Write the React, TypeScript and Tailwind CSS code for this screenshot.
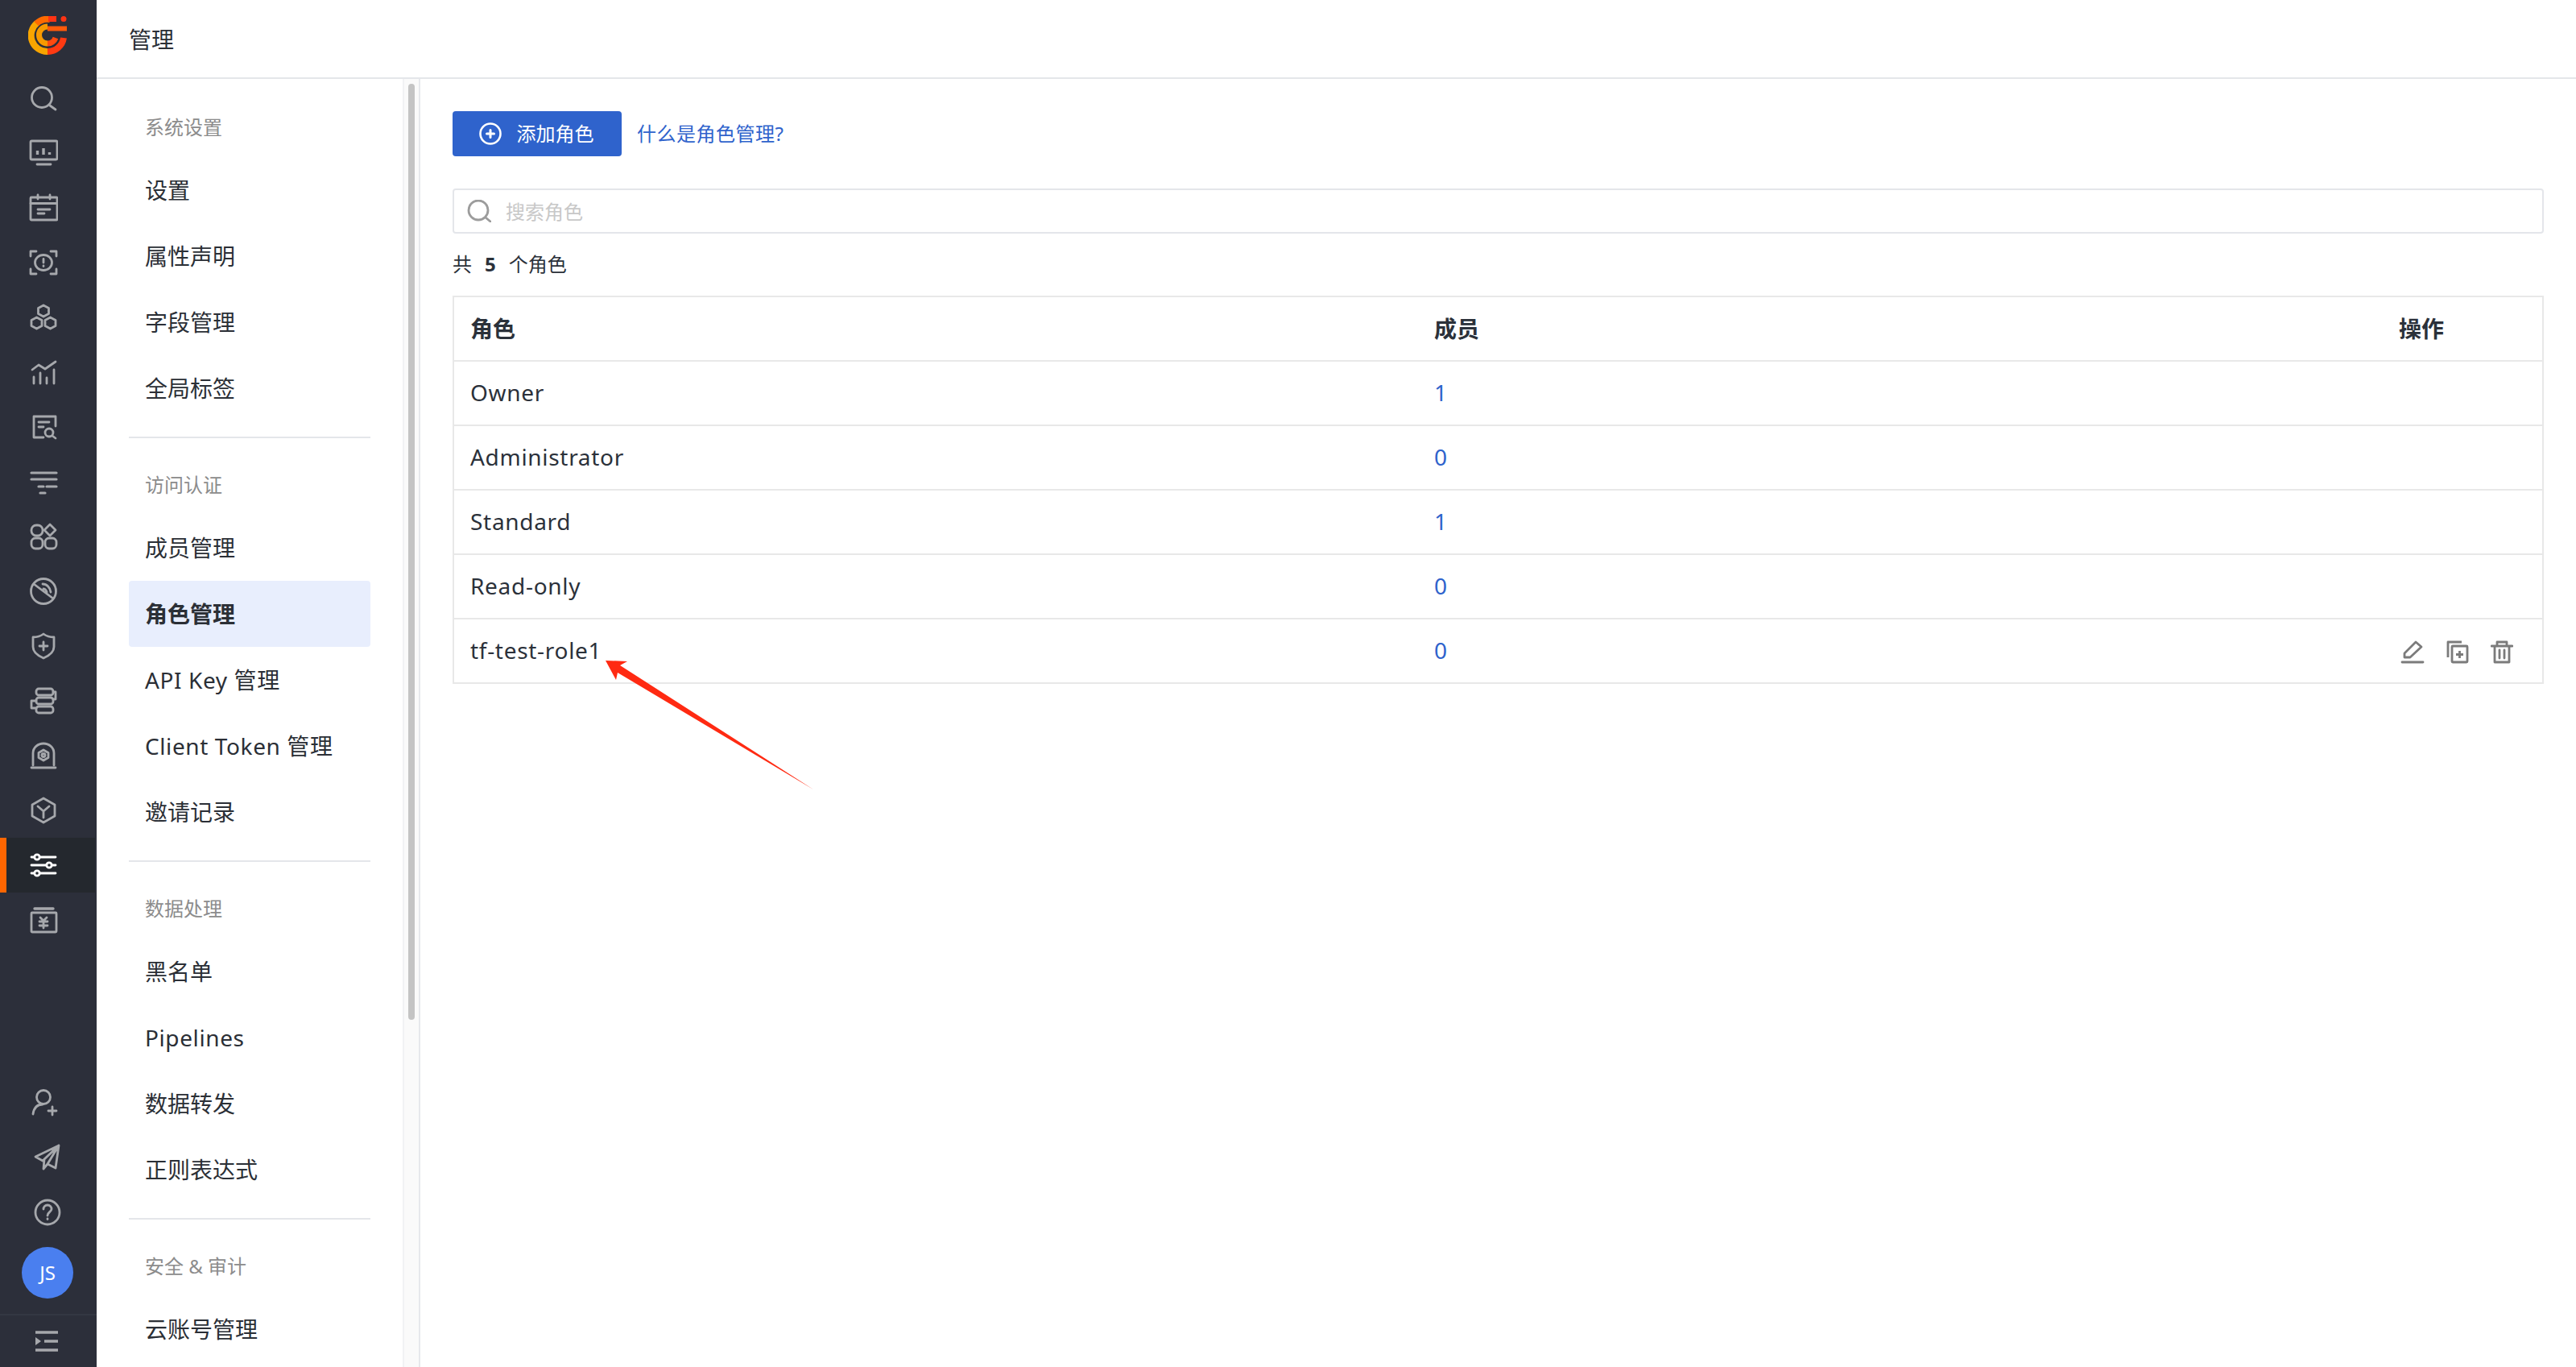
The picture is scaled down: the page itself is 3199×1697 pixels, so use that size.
import React from "react";

const S = ({ children, w = 36, cls = "" }: { children: React.ReactNode; w?: number; cls?: string }) => (
  <svg width={w} height={w} viewBox="0 0 36 36" fill="none" stroke="currentColor" strokeWidth="2.800" strokeLinecap="round" strokeLinejoin="round" className={cls}>
    {children}
  </svg>
);

const railIcons: React.ReactNode[] = [
  <S><circle cx="16" cy="17" r="12.500" /><path d="M26 27l7 5" /></S>,
  <S><rect x="2" y="3" width="33" height="23" rx="1.500" /><path d="M10 32h17" /><path d="M10.500 15v5M18 12v8M25.500 17v3" strokeWidth="3.400" strokeLinecap="butt" /></S>,
  <S><rect x="2" y="5" width="33" height="28" rx="1" /><path d="M2 12.500h33M11 2v5M26 2v5M11 20h15M11 25h8" /></S>,
  <S><path d="M2 10V4h7M27 4h7v6M2 26v6h7M27 32h7v-6" /><ellipse cx="18" cy="18" rx="10.500" ry="9.500" /><path d="M18 13.500v4.500M18 22v.5" /></S>,
  <S><path d="M18 3l6.500 3.500v7L18 17l-6.500-3.500v-7z" /><path d="M9.500 18l6.500 3.500v7L9.500 32 3 28.500v-7z" /><path d="M26.500 18l6.500 3.500v7L26.500 32 20 28.500v-7z" /></S>,
  <S><path d="M4 15l8-6 8 5 13-9M6 32v-8M14 32V19M22 32v-7M31 32V15" /></S>,
  <S><path d="M33 17V5H6v26h12M12 12h13M12 18h6" /><circle cx="25" cy="25" r="5" /><path d="M29 29l4 3" /></S>,
  <S><path d="M3 7h31M3 15h31M12 24h6M22 24h12M14 32h6" strokeWidth="3.200" /></S>,
  <S><rect x="3" y="4" width="14" height="13" rx="6" /><path d="M26 3l7 7-7 7-7-7z" /><rect x="3" y="20" width="14" height="13" rx="5" /><rect x="20" y="20" width="14" height="13" rx="5" /></S>,
  <S><circle cx="18" cy="18" r="15.500" /><path d="M6 9l24 18M17 9c5 0 9 4 10 10M18 15c2 0 4 2 4 5" /></S>,
  <S><path d="M18 3c4 3 8 4 13 4v12c0 7-6 11-13 14C11 30 5 26 5 19V7c5 0 9-1 13-4z" /><path d="M18 13v10M13 18h10" /></S>,
  <S><rect x="9" y="3" width="21" height="8" rx="3" /><rect x="9" y="14" width="21" height="8" rx="3" /><rect x="9" y="25" width="21" height="8" rx="3" /><path d="M30 7h3v9h-3M9 18H3v9h6" /></S>,
  <S><path d="M5 30V15C5 8 11 3 18 3s13 5 13 12v15" /><path d="M3 33h30" /><path d="M18 11l6 3.500v6L18 24l-6-3.500v-6z" /><circle cx="18" cy="17.500" r="2" /></S>,
  <S><path d="M18 3l14 8v14l-14 8-14-8V11z" /><path d="M11 13l7 6 7-6M18 19v8" /></S>,
];

const Rail = () => (
  <aside className="flex h-full w-[120px] shrink-0 flex-col bg-[#2c2f3a] text-[#a6a8ac]">
    <div className="flex h-[88px] shrink-0 items-start pl-[35px] pt-[20px]">
      <svg width="48" height="48" viewBox="0 0 48 48" fill="none">
        <path d="M11 8.500A20 20 0 0 0 24 44" stroke="#f8a500" strokeWidth="8" />
        <path d="M10 9.500A20 20 0 0 1 27 4" stroke="#ff6a00" strokeWidth="8" />
        <path d="M25 3.500h10" stroke="#ff3414" strokeWidth="7" />
        <circle cx="44" cy="3.500" r="3.500" fill="#ff3414" />
        <path d="M24 44A20 20 0 0 0 44 27" stroke="#ff3a12" strokeWidth="8" />
        <path d="M24 13A10.500 10.500 0 0 0 24 34" stroke="#f79a00" strokeWidth="7" />
        <path d="M24 34A10.500 10.500 0 0 0 34 27" stroke="#ff4a10" strokeWidth="7" />
        <path d="M24 15.500h24" stroke="#ff5a0a" strokeWidth="6" />
        <path d="M24 23h24" stroke="#2c2f3a" strokeWidth="4" />
        <circle cx="23" cy="23.500" r="4" fill="#2c2f3a" />
      </svg>
    </div>
    {railIcons.map((ic, i) => (
      <div key={i} className="flex h-[68px] w-[120px] shrink-0 items-center pl-[36px]">{ic}</div>
    ))}
    <div className="flex h-[68px] w-[118px] shrink-0 items-center border-l-[8px] border-[#ff6600] bg-[#24282e] pl-[28px] text-white">
      <S><path d="M3 8h30M3 18h30M3 28h30" /><circle cx="10" cy="8" r="3.200" fill="#24282e" /><circle cx="25" cy="18" r="3.200" fill="#24282e" /><circle cx="10" cy="28" r="3.200" fill="#24282e" /></S>
    </div>
    <div className="flex h-[68px] w-[120px] shrink-0 items-center pl-[36px]">
      <S><rect x="3" y="9" width="31" height="24" rx="1" /><path d="M7 4h23" strokeWidth="3.400" /><path d="M18 19v9M14 15l4 4 4-4M13 20h10M13 25h10" /></S>
    </div>
    <div className="flex-1" />
    <div className="flex h-[68px] shrink-0 items-center pl-[36px]"><S><circle cx="18" cy="11" r="8.500" /><path d="M5 32c1-7 5-12 12-12M24 28h10M29 23v10" /></S></div>
    <div className="flex h-[68px] shrink-0 items-center pl-[40px]"><S><path d="M33 3L4 17l9 5zM33 3l-4 28-10-5zM33 3L15 20l-1 12 5-6" /></S></div>
    <div className="flex h-[68px] shrink-0 items-center pl-[41px]"><S><circle cx="18" cy="18" r="15" /><path d="M13 14c0-3 2-5 5-5s5 2 5 5-5 4-5 8M18 26v.5" /></S></div>
    <div className="mb-[10px] flex h-[82px] shrink-0 items-center pl-[27px]">
      <div className="flex h-[64px] w-[64px] items-center justify-center rounded-full bg-[#4a7fef] text-[24px] text-white">JS</div>
    </div>
    <div className="flex h-[66px] shrink-0 items-center border-t-2 border-[#333742] pl-[41px]">
      <svg width="32" height="30" viewBox="0 0 32 30" fill="none" stroke="currentColor" strokeWidth="3.500"><path d="M3 4h28M14 15h17M3 26h28" /><path d="M3 10l7 5-7 5z" fill="currentColor" stroke="none" /></svg>
    </div>
  </aside>
);

const groups: { title: string; items: string[] }[] = [
  { title: "系统设置", items: ["设置", "属性声明", "字段管理", "全局标签"] },
  { title: "访问认证", items: ["成员管理", "角色管理", "API Key 管理", "Client Token 管理", "邀请记录"] },
  { title: "数据处理", items: ["黑名单", "Pipelines", "数据转发", "正则表达式"] },
  { title: "安全 & 审计", items: ["云账号管理"] },
];

const SubNav = () => (
  <div className="relative h-full w-[402px] shrink-0 overflow-hidden border-r-2 border-[#e6e8ec]">
    <nav className="w-[380px] px-[40px] pt-[23px]">
      {groups.map((g, i) => (
        <div key={g.title} className={i < groups.length - 1 ? "mb-[21px] border-b-2 border-[#e4e6ea] pb-[19px]" : ""}>
          <div className="flex h-[74px] items-center px-[20px] text-[24px] text-[#8c8c8c]">{g.title}</div>
          {g.items.map((it) => {
            const active = it === "角色管理";
            const latin = /[A-Za-z]/.test(it);
            return (
              <div
                key={it}
                className={
                  active
                    ? "flex h-[82px] items-center rounded-[4px] bg-[#e8eefd] px-[20px] text-[28px] font-bold text-[#2b2f36]"
                    : latin
                      ? "flex h-[82px] items-center px-[20px] text-[28px] tracking-[0.6px] text-[#2b2f36]"
                      : "flex h-[82px] items-center px-[20px] text-[28px] text-[#2b2f36]"
                }
              >
                {it}
              </div>
            );
          })}
        </div>
      ))}
    </nav>
    <div className="absolute bottom-0 right-0 top-0 w-[20px] border-l-2 border-[#f1f2f4] bg-[#fafafa]">
      <div className="mx-auto mt-[6px] h-[1162px] w-[8px] rounded-full bg-[#c4c4c4]" />
    </div>
  </div>
);

const rows = [
  ["Owner", "1"],
  ["Administrator", "0"],
  ["Standard", "1"],
  ["Read-only", "0"],
  ["tf-test-role1", "0"],
];

const Content = () => (
  <main className="relative min-w-0 flex-1 px-[40px] pt-[40px]">
    <div className="flex items-center gap-[19px]">
      <button className="flex h-[56px] w-[210px] items-center justify-center gap-[19px] rounded-[4px] bg-[#2f63cc] pr-[2px] text-[24px] text-white">
        <svg width="28" height="28" viewBox="0 0 28 28" fill="none" stroke="currentColor" strokeWidth="2.600" strokeLinecap="round"><circle cx="14" cy="14" r="12.500" /><path d="M14 9.500v9M9.500 14h9" strokeWidth="3" /></svg>
        添加角色
      </button>
      <a className="text-[24px] tracking-[0.5px] text-[#2f63cc]">什么是角色管理?</a>
    </div>
    <div className="mt-[40px] flex h-[56px] items-center gap-[18px] rounded-[4px] border-2 border-[#e4e6ea] pl-[16px]">
      <svg width="30" height="28" viewBox="0 0 30 28" fill="none" stroke="#9c9c9c" strokeWidth="2.800" strokeLinecap="round"><circle cx="14" cy="13" r="12" /><path d="M23 22l6 5" /></svg>
      <span className="pt-[1px] text-[24px] text-[#c8c8c8]">搜索角色</span>
    </div>
    <div className="flex h-[77px] items-center pb-[1px] text-[24px] text-[#2b313a]">
      <span>共</span><span className="mx-[16px] font-bold">5</span><span>个角色</span>
    </div>
    <table className="w-full table-fixed border-collapse border-2 border-[#e8e8e8] text-[28px] text-[#2b313a]">
      <thead>
        <tr className="h-[80px] border-b-2 border-[#e8e8e8]">
          <th className="w-[1218px] pl-[20px] text-left font-bold">角色</th>
          <th className="w-[1198px] text-left font-bold">成员</th>
          <th className="text-left font-bold">操作</th>
        </tr>
      </thead>
      <tbody>
        {rows.map(([n, c], i) => (
          <tr key={n} className="h-[80px] border-b-2 border-[#e8e8e8]">
            <td className="pb-[2px] pl-[20px] tracking-[0.7px]">{n}</td>
            <td className="pb-[2px] tracking-[1px] text-[#2f63cc]">{c}</td>
            <td>
              {i === 4 && (
                <div className="flex items-center gap-[27px] pl-[2px] pt-[2px] text-[#7b7b7b]">
                  <svg width="30" height="30" viewBox="0 0 30 30" fill="none" stroke="currentColor" strokeWidth="2.800" strokeLinejoin="round" strokeLinecap="round"><path d="M5 22v-5L19 3l7 6-14 13zM2 28h26" /></svg>
                  <svg width="28" height="30" viewBox="0 0 28 30" fill="none" stroke="currentColor" strokeWidth="2.800" strokeLinejoin="round"><path d="M2 22V3h17" /><rect x="7" y="8" width="19" height="20" rx="1" /><path d="M16.500 14v9M12 18.500h9" /></svg>
                  <svg width="28" height="30" viewBox="0 0 28 30" fill="none" stroke="currentColor" strokeWidth="2.800" strokeLinejoin="round" strokeLinecap="round"><path d="M1 8h26M8 8V3h12v5M5 8v20h18V8M11 13v10M17 13v10" /></svg>
                </div>
              )}
            </td>
          </tr>
        ))}
      </tbody>
    </table>
  </main>
);

export default function App() {
  return (
    <div className="relative flex h-screen w-screen overflow-hidden bg-white font-['Noto_Sans','Noto_Sans_CJK_SC',sans-serif]">
      <Rail />
      <div className="flex min-w-0 flex-1 flex-col">
        <header className="flex h-[98px] shrink-0 items-center border-b-2 border-[#e4e6ea] pl-[40px] pt-[1px] text-[28px] text-[#2b2f36]">管理</header>
        <div className="flex min-h-0 flex-1">
          <SubNav />
          <Content />
        </div>
      </div>
      <svg className="pointer-events-none absolute left-[750px] top-[818px]" width="264" height="166" viewBox="750 818 264 166">
        <path d="M752 820L779 821L770 826L1010 980L767 835L765 844Z" fill="#ff2a12" />
      </svg>
    </div>
  );
}
